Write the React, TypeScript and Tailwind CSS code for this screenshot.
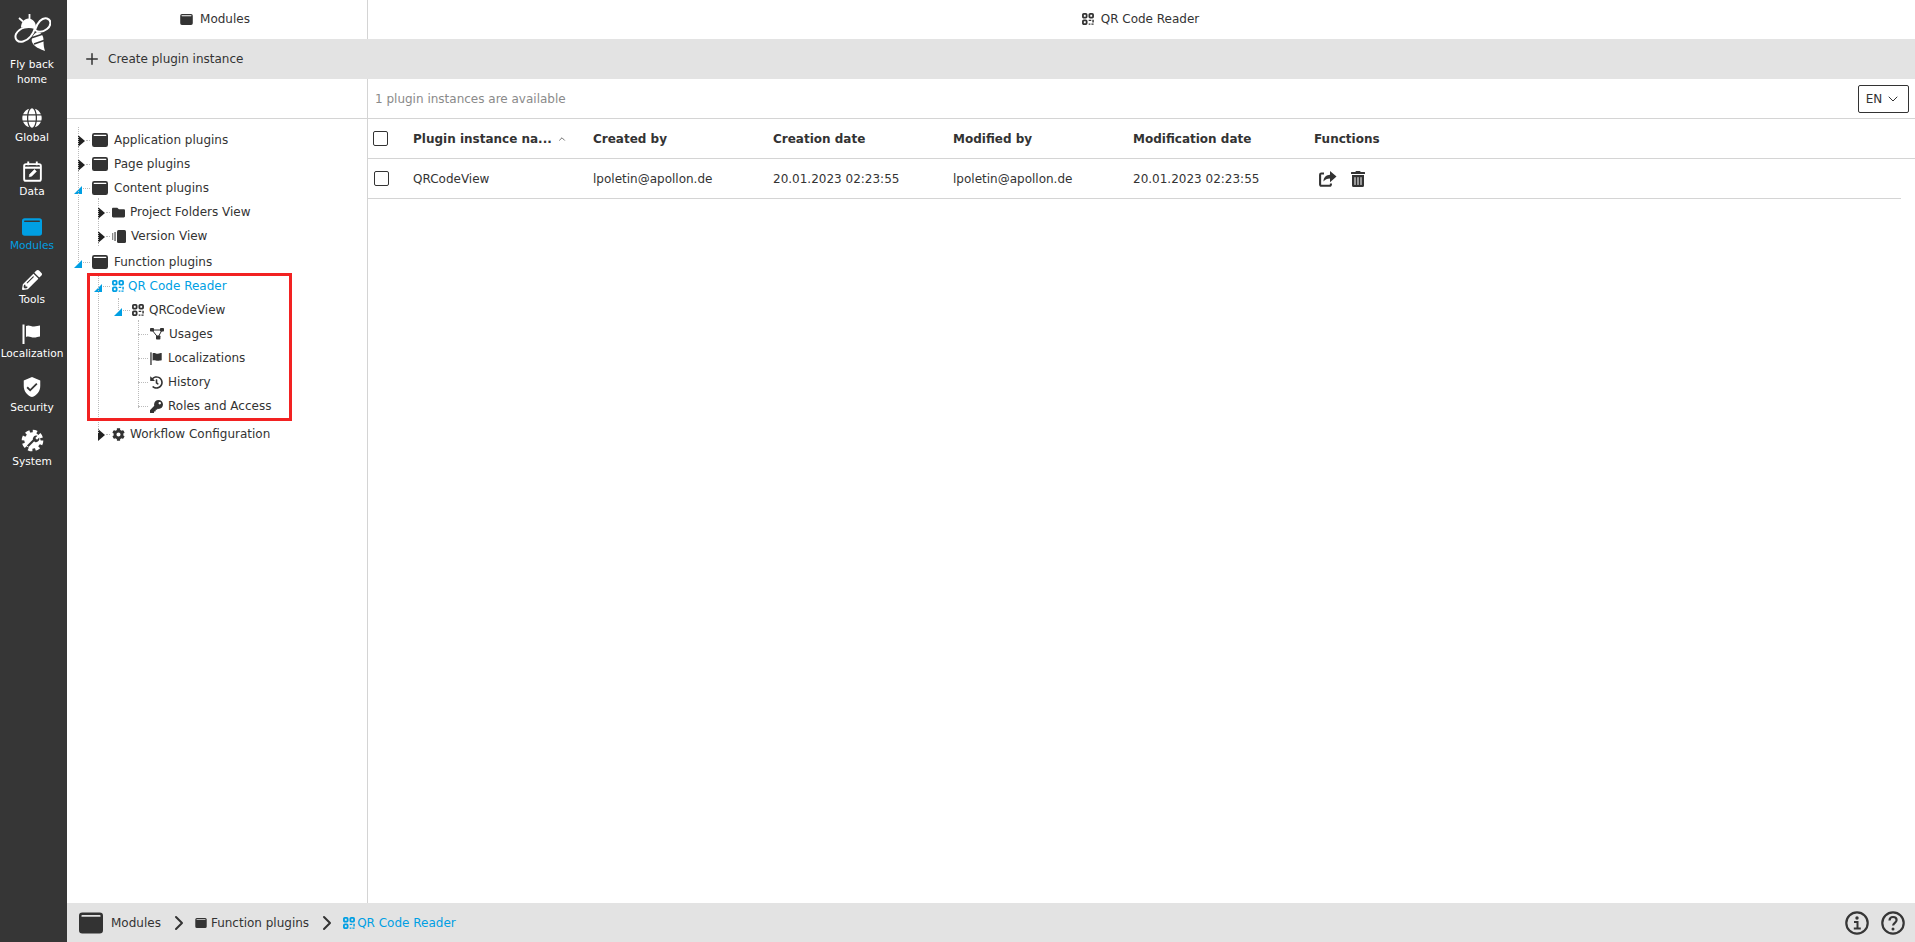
import type { ReactNode } from "react";
import { FaCog, FaFolder, FaGlobe, FaHistory, FaKey, FaPencilAlt, FaTrashAlt } from "react-icons/fa";
import { MdVerifiedUser } from "react-icons/md";
import { LuChevronDown, LuChevronRight, LuChevronUp, LuPlus } from "react-icons/lu";

function WindowIcon({ className }: { className: string }) {
  return (
    <svg viewBox="0 0 16 14" className={className} fill="currentColor">
      <path fillRule="evenodd" d="M2.2 0h11.6A2.2 2.2 0 0 1 16 2.2v9.600a2.200 2.200 0 0 1-2.200 2.200H2.200A2.200 2.200 0 0 1 0 11.800V2.200A2.200 2.200 0 0 1 2.200 0zM2.200 1.700a.6.6 0 0 0 0 1.200h11.600a.6.6 0 0 0 0-1.200z" />
    </svg>
  );
}

function QrIcon({ className }: { className: string }) {
  return (
    <svg viewBox="0 0 14 14" className={className} fill="none" stroke="currentColor" strokeWidth="2.100">
      <rect x="1.100" y="1.100" width="4.300" height="4.300" rx="1" />
      <rect x="8.600" y="1.100" width="4.300" height="4.300" rx="1" />
      <rect x="1.100" y="8.600" width="4.300" height="4.300" rx="1" />
      <path d="M7.800 8.600h3M12.900 7.800v3.200M7.800 13h2M11 13h2.500" strokeWidth="1.700" />
    </svg>
  );
}

function FlagIcon({ className }: { className: string }) {
  return (
    <svg viewBox="0 0 20 20" className={className} fill="currentColor">
      <rect x="0.500" y="0.500" width="2" height="19.500" />
      <path d="M4 2c3-1.600 5.500.8 8 .6 2.500-.2 4-1 6-1.100v11c-2 .1-3.500 1-6 1.100-2.500.2-5-2-8-.6z" />
    </svg>
  );
}

function NodesIcon({ className }: { className: string }) {
  return (
    <svg viewBox="0 0 14 12" className={className} fill="currentColor" stroke="currentColor">
      <path d="M2 2h10M2 2l6 7.500M12 2L8 9.500" strokeWidth="1" fill="none" />
      <rect x="0" y="0" width="4" height="3.600" rx="0.800" stroke="none" />
      <rect x="10" y="0" width="4" height="3.600" rx="0.800" stroke="none" />
      <rect x="6" y="7.500" width="4.400" height="4" rx="0.800" stroke="none" />
    </svg>
  );
}

function VersionIcon({ className }: { className: string }) {
  return (
    <svg viewBox="0 0 14 13" className={className} fill="currentColor">
      <rect x="0" y="3" width="1.300" height="7" fill="#8a8a8a" />
      <rect x="2.300" y="2" width="1.500" height="9" fill="#6a6a6a" />
      <rect x="5" y="0" width="9" height="13" rx="1.500" />
    </svg>
  );
}

function CalendarEditIcon({ className }: { className: string }) {
  return (
    <svg viewBox="0 0 20 22" className={className} fill="none" stroke="currentColor">
      <rect x="1.200" y="3.200" width="17.600" height="17.600" rx="2" strokeWidth="2" />
      <path d="M1 7h18" strokeWidth="2.200" />
      <path d="M5.500 0.500v4M14.500 0.500v4" strokeWidth="2" />
      <path d="M6.500 16.500l.6-2.600 5-5 2 2-5 5z" fill="currentColor" strokeWidth="0.600" />
    </svg>
  );
}

function GearWrenchIcon({ className }: { className: string }) {
  return (
    <svg viewBox="0 0 24 24" className={className} fill="none">
      <circle cx="12" cy="12" r="9.300" stroke="#fff" strokeWidth="4" strokeDasharray="4.300 3" />
      <circle cx="12" cy="12" r="8.500" fill="#fff" />
      <path d="M7 18l6.500-6.500" stroke="#363636" strokeWidth="2.300" />
      <path d="M12.500 11.500a3.600 3.600 0 0 1 4.700-4.500l-2.300 2.300 1.800 1.800 2.300-2.300a3.600 3.600 0 0 1-4.500 4.700z" fill="#363636" />
    </svg>
  );
}

function ShareBoxIcon({ className }: { className: string }) {
  return (
    <svg viewBox="0 0 18 17" className={className} fill="none" stroke="currentColor">
      <path d="M5 3.500H2.300a1.200 1.200 0 0 0-1.200 1.200v9.900a1.200 1.200 0 0 0 1.200 1.200h8.400a1.200 1.200 0 0 0 1.200-1.200v-1" strokeWidth="2.100" />
      <path d="M4.500 11.500C4.500 7 7.500 4.800 11 4.700V1l6.500 5.600L11 12.200V8.500C8.200 8.500 6 9.500 4.500 11.500z" fill="currentColor" stroke="none" />
    </svg>
  );
}

function BeeLogo({ className }: { className: string }) {
  return (
    <svg viewBox="0 0 37 37" className={className} fill="none" stroke="#fff">
      <path d="M15.500 0v6M5 4l4 3.500" strokeWidth="1.800" />
      <path d="M7 13.500C7 8 10.500 4.500 14.500 4.500S22 8 22 13.500z" fill="#fff" stroke="none" />
      <path d="M21 16C23 9 28 3 33 4.500 38 6 37 12 33 15 29 18 25 19 21 16z" strokeWidth="2" />
      <path d="M21 14C14 12 6 13 2 20 0 25 4 29 9 27.500 14 26 19 21 21 14z" strokeWidth="2" />
      <path d="M23 18C27 18 30 22 29.500 27 29.500 31 30 34 31 37 26 35 20 33 18 28 17 25 19 20 23 18z" fill="#fff" stroke="none" />
      <path d="M17 24l12-4M20 30l10-3.500" stroke="#363636" strokeWidth="1.600" />
    </svg>
  );
}

function InfoIcon() {
  return (
    <svg viewBox="0 0 24 24" className="w-6 h-6" fill="none" stroke="#363636">
      <circle cx="12" cy="12" r="10.700" strokeWidth="2.200" />
      <circle cx="12" cy="7" r="1.700" fill="#363636" stroke="none" />
      <path d="M9 11h3.500v6.500M8.800 17.500h7" strokeWidth="2" />
    </svg>
  );
}

function HelpIcon() {
  return (
    <svg viewBox="0 0 24 24" className="w-6 h-6" fill="none" stroke="#363636">
      <circle cx="12" cy="12" r="10.700" strokeWidth="2.200" />
      <path d="M8.500 9.500C8.600 7.400 10 6 12 6c2.200 0 3.600 1.300 3.600 3.100 0 2.700-3.300 2.800-3.500 5.400" strokeWidth="2.200" />
      <circle cx="12" cy="18" r="1.500" fill="#363636" stroke="none" />
    </svg>
  );
}

function NavItem({ icon, label, active }: { icon: ReactNode; label: string; active?: boolean }) {
  return (
    <div className={`h-[54px] flex flex-col items-center justify-start ${active ? "text-[#009fe3]" : "text-white"}`}>
      <div className="h-[30px] flex items-end justify-center pb-[2px]">{icon}</div>
      <span className="text-[10.600px] leading-[14px] whitespace-nowrap">{label}</span>
    </div>
  );
}

function Toggle({ open }: { open?: boolean }) {
  return open ? (
    <span className="w-0 h-0 shrink-0 border-b-[8px] border-l-[8px] border-b-[#009fe3] border-l-transparent mt-[3px]" />
  ) : (
    <span className="w-0 h-0 shrink-0 border-y-[6px] border-l-[7px] border-y-transparent border-l-[#222] mt-px" />
  );
}

type RowProps = {
  indent: string;
  open?: boolean;
  closed?: boolean;
  icon: ReactNode;
  label: string;
  blue?: boolean;
  slot?: string;
  gap?: string;
  extra?: string;
};

function TreeRow({ indent, open, closed, icon, label, blue, slot = "w-[14px]", gap = "gap-[5px]", extra = "" }: RowProps) {
  return (
    <div className={`h-6 flex items-center ${indent} ${extra}`}>
      <span className={`${slot} shrink-0 flex items-center h-full`}>
        {open ? <Toggle open /> : closed ? <Toggle /> : null}
        <span className={`border-t border-dotted border-[#bbb] flex-1 ${open || closed ? "ml-px mr-[2px]" : "mr-[2px]"}`} />
      </span>
      <span className={`flex items-center ${gap} ${blue ? "text-[#009fe3]" : "text-[#333]"}`}>
        {icon}
        <span className="whitespace-nowrap">{label}</span>
      </span>
    </div>
  );
}

function Tree() {
  return (
    <div className="relative pt-[9px] text-[12px] text-[#333]">
      {/* dotted connectors */}
      <div className="absolute left-[11px] top-[8px] h-[135px] border-l border-dotted border-[#bbb]" />
      <div className="absolute left-[31px] top-[79px] h-[48px] border-l border-dotted border-[#bbb]" />
      <div className="absolute left-[31px] top-[154px] h-[160px] border-l border-dotted border-[#bbb]" />
      <div className="absolute left-[51px] top-[179px] h-[12px] border-l border-dotted border-[#bbb]" />
      <div className="absolute left-[71px] top-[201px] h-[88px] border-l border-dotted border-[#bbb]" />

      <TreeRow indent="pl-[11px]" closed icon={<WindowIcon className="w-4 h-[14px]" />} label="Application plugins" gap="gap-[6px]" />
      <TreeRow indent="pl-[11px]" closed icon={<WindowIcon className="w-4 h-[14px]" />} label="Page plugins" gap="gap-[6px]" />
      <TreeRow indent="pl-[7px]" open slot="w-[18px]" icon={<WindowIcon className="w-4 h-[14px]" />} label="Content plugins" gap="gap-[6px]" />
      <TreeRow indent="pl-[31px]" closed icon={<FaFolder className="w-[13px] h-[13px]" />} label="Project Folders View" gap="gap-[5px]" />
      <TreeRow indent="pl-[31px]" closed icon={<VersionIcon className="w-[14px] h-[13px]" />} label="Version View" gap="gap-[5px]" />
      <TreeRow indent="pl-[7px]" open slot="w-[18px]" icon={<WindowIcon className="w-4 h-[14px]" />} label="Function plugins" gap="gap-[6px]" extra="mt-[2px]" />
      <TreeRow indent="pl-[27px]" open slot="w-[18px]" icon={<QrIcon className="w-3 h-3" />} label="QR Code Reader" blue gap="gap-[4px]" />
      <TreeRow indent="pl-[47px]" open slot="w-[18px]" icon={<QrIcon className="w-3 h-3" />} label="QRCodeView" gap="gap-[5px]" />
      <TreeRow indent="pl-[71px]" slot="w-[12px]" icon={<NodesIcon className="w-[14px] h-3" />} label="Usages" gap="gap-[5px]" />
      <TreeRow indent="pl-[71px]" slot="w-[12px]" icon={<FlagIcon className="w-[13px] h-[13px]" />} label="Localizations" gap="gap-[5px]" />
      <TreeRow indent="pl-[71px]" slot="w-[12px]" icon={<FaHistory className="w-[13px] h-[13px]" />} label="History" gap="gap-[5px]" />
      <TreeRow indent="pl-[71px]" slot="w-[12px]" icon={<FaKey className="w-[13px] h-[13px]" />} label="Roles and Access" gap="gap-[5px]" />
      <TreeRow indent="pl-[31px]" closed icon={<FaCog className="w-[13px] h-[13px]" />} label="Workflow Configuration" gap="gap-[5px]" extra="mt-[4px]" />

      {/* red annotation box */}
      <div className="absolute left-[20px] top-[154px] w-[205px] h-[148px] border-[3px] border-[#f22222] pointer-events-none" />
    </div>
  );
}

const columns = ["Created by", "Creation date", "Modified by", "Modification date"];
const cells = ["lpoletin@apollon.de", "20.01.2023 02:23:55", "lpoletin@apollon.de", "20.01.2023 02:23:55"];

function PluginTable() {
  return (
    <div className="text-[12px] text-[#333]">
      <div className="h-10 flex items-center border-b border-[#d4d4d4] font-bold">
        <div className="w-[45px] pl-[5px]">
          <div className="w-[15px] h-[15px] border border-[#333] rounded-[2px]" />
        </div>
        <div className="w-[180px] flex items-center gap-[5px]">
          <span className="whitespace-nowrap">Plugin instance na...</span>
          <LuChevronUp className="w-[10px] h-[10px] text-[#555]" />
        </div>
        {columns.map((c) => (
          <div key={c} className="w-[180px] whitespace-nowrap">{c}</div>
        ))}
        <div className="pl-px">Functions</div>
      </div>
      <div className="h-10 flex items-center border-b border-[#d4d4d4] mr-[14px]">
        <div className="w-[45px] pl-[6px]">
          <div className="w-[15px] h-[15px] border border-[#333] rounded-[2px]" />
        </div>
        <div className="w-[180px]">QRCodeView</div>
        {cells.map((c, i) => (
          <div key={i} className="w-[180px] whitespace-nowrap">{c}</div>
        ))}
        <div className="flex items-center gap-[14px] pl-[6px]">
          <ShareBoxIcon className="w-[18px] h-[17px]" />
          <FaTrashAlt className="w-[14px] h-4" />
        </div>
      </div>
    </div>
  );
}

export default function App() {
  return (
    <div className="h-screen flex overflow-hidden bg-white text-[12px] text-[#333] font-['DejaVu_Sans',sans-serif]">
      <aside className="w-[67px] shrink-0 bg-[#363636] flex flex-col pr-[3px]">
        <div className="h-[101px] flex flex-col items-center pt-[14px] text-white">
          <BeeLogo className="w-[37px] h-[37px] mb-[6px]" />
          <span className="text-[10.600px] leading-[15px] text-center">Fly back<br />home</span>
        </div>
        <div className="-mt-[1px]">
          <NavItem icon={<FaGlobe className="w-5 h-5" />} label="Global" />
          <NavItem icon={<CalendarEditIcon className="w-[19px] h-[21px]" />} label="Data" />
          <NavItem active icon={<WindowIcon className="w-5 h-[18px]" />} label="Modules" />
          <NavItem icon={<FaPencilAlt className="w-5 h-5" />} label="Tools" />
          <NavItem icon={<FlagIcon className="w-5 h-5" />} label="Localization" />
          <NavItem icon={<MdVerifiedUser className="w-[22px] h-[22px]" />} label="Security" />
          <NavItem icon={<GearWrenchIcon className="w-[23px] h-[23px]" />} label="System" />
        </div>
      </aside>

      <div className="flex-1 min-w-0 flex flex-col">
        <header className="h-[39px] flex shrink-0">
          <div className="w-[301px] border-r border-[#d4d4d4] flex items-center justify-center gap-[7px] pr-1 pb-px">
            <WindowIcon className="w-[13px] h-[11px]" />
            <span>Modules</span>
          </div>
          <div className="flex-1 flex items-center justify-center gap-[7px] pr-[2px] pb-px">
            <QrIcon className="w-3 h-3" />
            <span>QR Code Reader</span>
          </div>
        </header>

        <div className="h-10 shrink-0 bg-[#e3e3e3] flex items-center pl-4 gap-[7px]">
          <LuPlus className="w-[18px] h-[18px] text-[#333]" />
          <span>Create plugin instance</span>
        </div>

        <div className="h-10 shrink-0 flex border-b border-[#d4d4d4]">
          <div className="w-[301px] border-r border-[#d4d4d4]" />
          <div className="flex-1 flex items-center justify-between pl-[7px] pr-[6px]">
            <span className="text-[#8a8a8a]">1 plugin instances are available</span>
            <div className="w-[51px] h-[28px] border border-[#333] rounded-[2px] flex items-center justify-center gap-[3px] text-[12px]">
              EN
              <LuChevronDown className="w-4 h-4 stroke-[1.500]" />
            </div>
          </div>
        </div>

        <div className="flex-1 min-h-0 flex">
          <div className="w-[301px] border-r border-[#d4d4d4]">
            <Tree />
          </div>
          <div className="flex-1 min-w-0">
            <PluginTable />
          </div>
        </div>

        <footer className="h-[39px] shrink-0 bg-[#e3e3e3] flex items-center justify-between pl-3 pr-[10px]">
          <div className="flex items-center">
            <WindowIcon className="w-6 h-[22px]" />
            <span className="ml-2">Modules</span>
            <LuChevronRight className="w-6 h-6 ml-[6px] mr-1" />
            <WindowIcon className="w-3 h-[10px] mr-1" />
            <span>Function plugins</span>
            <LuChevronRight className="w-6 h-6 ml-[6px] mr-1" />
            <span className="flex items-center gap-[2px] text-[#009fe3]">
              <QrIcon className="w-3 h-3" />
              QR Code Reader
            </span>
          </div>
          <div className="flex items-center gap-3">
            <InfoIcon />
            <HelpIcon />
          </div>
        </footer>
      </div>
    </div>
  );
}
